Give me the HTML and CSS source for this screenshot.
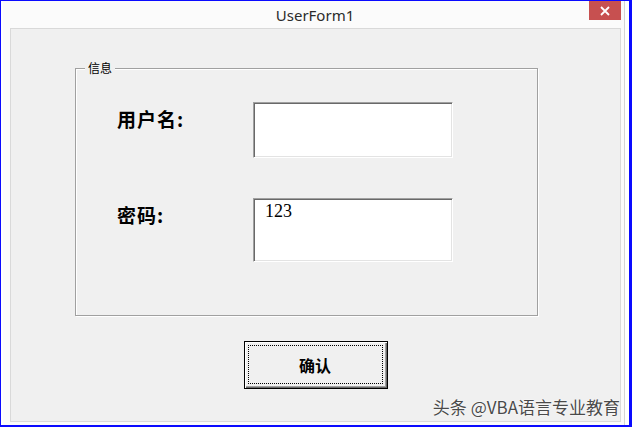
FILE: index.html
```html
<!DOCTYPE html>
<html lang="zh-CN">
<head>
    <meta charset="UTF-8">
    <meta name="viewport" content="width=device-width, initial-scale=1.0">
    <title>UserForm1</title>
    <link rel="stylesheet" href="styles.css">
</head>
<body>
    <div class="screen">
        <div class="window">
            <div class="title-bar">
                <span class="title">UserForm1</span>
                <button class="close-button" aria-label="关闭">
                    <svg width="10" height="10" viewBox="0 0 10 10">
                        <path d="M1 1 L9 9 M9 1 L1 9" stroke="#fff" stroke-width="1.8" fill="none"/>
                    </svg>
                </button>
            </div>
            <div class="client">
                <div class="group">
                    <span class="group-title">信息</span>
                    <div class="form-grid">
                        <label class="field-label" for="username">用户名:</label>
                        <textarea class="textbox textbox-user" id="username"></textarea>
                        <label class="field-label" for="password">密码:</label>
                        <textarea class="textbox textbox-pass" id="password">123</textarea>
                    </div>
                </div>
                <button class="ok-button"><span class="focus-rect">确认</span></button>
            </div>
        </div>
        <div class="watermark">头条 @VBA语言专业教育</div>
    </div>
</body>
</html>
```

FILE: styles.css
```css
body {
    margin: 0;
    padding: 0;
    background-color: #fff;
    font-family: "Noto Sans", "Noto Sans CJK SC", sans-serif;
}

.screen {
    position: relative;
    width: 632px;
    height: 427px;
    box-sizing: border-box;
    border-top: 1px solid #0a0aff;
    border-right: 3px solid #0a0aff;
    border-bottom: 2px solid #0a0aff;
    border-left: 1px solid #0a0aff;
    padding-left: 2px;
    background-color: #fff;
}

.window {
    width: 622px;
    height: 100%;
    box-sizing: border-box;
    border-right: 1px solid #d4d4d4;
    background-color: #fbfbfb;
    display: flex;
    flex-direction: column;
}

.title-bar {
    position: relative;
    height: 27px;
    display: flex;
    justify-content: center;
    align-items: center;
    padding-left: 3px;
}

.title {
    font-family: "Noto Sans", sans-serif;
    font-size: 15px;
    color: #2b2b2b;
}

.close-button {
    position: absolute;
    top: 0;
    right: 3px;
    width: 32px;
    height: 19px;
    border: none;
    padding: 0;
    background-color: #c75050;
    display: flex;
    justify-content: center;
    align-items: center;
}

.client {
    margin-left: 7px;
    width: 611px;
    height: 394px;
    box-sizing: border-box;
    border: 1px solid #d9d9d9;
    background-color: #f0f0f0;
    display: flex;
    flex-direction: column;
}

.group {
    position: relative;
    margin: 39px 0 0 64px;
    width: 463px;
    height: 248px;
    box-sizing: border-box;
    border: 1px solid #a0a0a0;
    box-shadow: inset 1px 1px 0 #fff, 1px 1px 0 #fff;
    padding: 33px 0 0 41px;
}

.group-title {
    position: absolute;
    top: -8px;
    left: 9px;
    padding: 0 3px;
    background-color: #f0f0f0;
    font-family: "Noto Sans CJK SC", sans-serif;
    font-size: 12px;
    line-height: 14px;
    color: #000;
}

.form-grid {
    display: grid;
    grid-template-columns: 136px 200px;
    row-gap: 40px;
}

.field-label {
    padding-top: 5px;
    font-family: "Noto Sans CJK SC", sans-serif;
    font-size: 19px;
    font-weight: 700;
    line-height: 24px;
    letter-spacing: 1px;
    color: #000;
}

.textbox {
    display: block;
    width: 200px;
    margin: 0;
    box-sizing: border-box;
    border: 1px solid;
    border-color: #a0a0a0 #fff #fff #a0a0a0;
    box-shadow: inset 1px 1px 0 #696969, inset -1px -1px 0 #e3e3e3;
    background-color: #fff;
    padding: 2px 11px;
    font-family: "Liberation Serif", "Noto Sans CJK SC", serif;
    font-size: 18px;
    line-height: 20px;
    color: #000;
    resize: none;
    overflow: hidden;
    outline: none;
}

.textbox-user {
    height: 56px;
}

.textbox-pass {
    height: 64px;
}

.ok-button {
    align-self: center;
    margin-top: 25px;
    width: 144px;
    height: 48px;
    box-sizing: border-box;
    border: 1px solid #000;
    background-color: #f0f0f0;
    box-shadow: inset 1px 1px 0 #fff, inset -1px -1px 0 #696969, inset -2px -2px 0 #a0a0a0;
    padding: 3px 4px 4px 3px;
    display: flex;
}

.focus-rect {
    flex: 1;
    border: 1px dotted #000;
    display: flex;
    justify-content: center;
    align-items: center;
    font-family: "Noto Sans CJK SC", sans-serif;
    font-size: 16px;
    font-weight: 700;
    color: #000;
}

.watermark {
    position: absolute;
    right: 9px;
    bottom: 8px;
    font-family: "Noto Sans CJK SC", sans-serif;
    font-size: 17px;
    line-height: 20px;
    color: #4a4a4a;
    text-shadow: 0 0 2px #fff, 0 0 1px #fff;
}
```
